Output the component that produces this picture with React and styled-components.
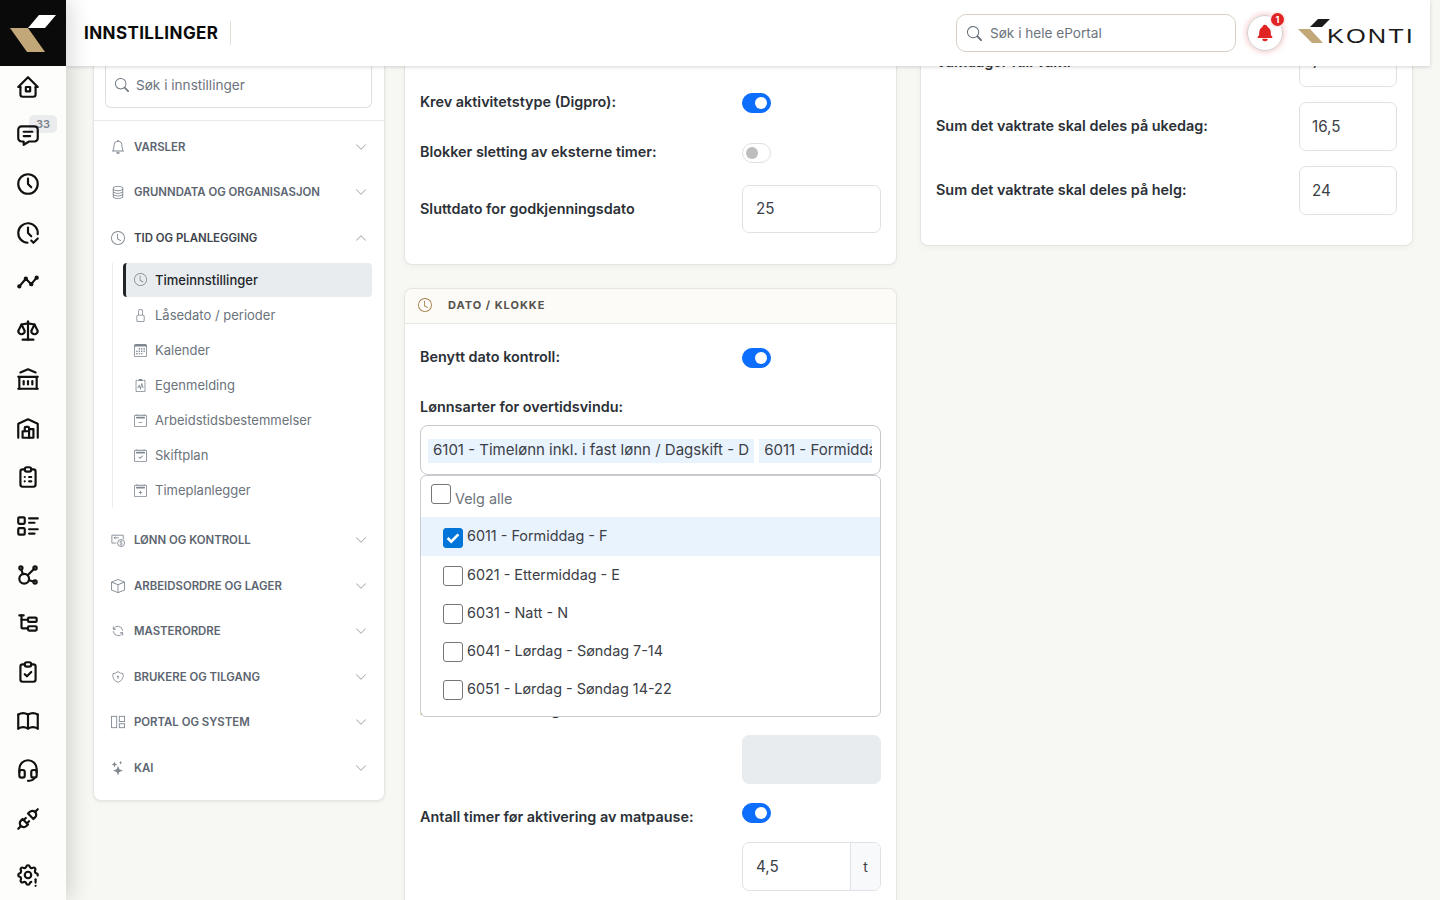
import React from 'react';
import styled, { createGlobalStyle } from 'styled-components';
import {
  TbHome2, TbMessage, TbClock, TbClockCheck, TbTimeline, TbScale, TbBuildingBank, TbBuildingWarehouse,
  TbClipboardList, TbListDetails, TbAffiliate, TbSubtask, TbClipboardCheck, TbBook, TbHeadset, TbPlugConnected,
  TbSettingsExclamation, TbBellFilled, TbRefresh, TbShieldLock,
} from 'react-icons/tb';
import {
  BsSearch, BsBell, BsChevronDown, BsChevronUp, BsDatabase, BsClock, BsLock, BsCalendar3, BsClipboard2Pulse,
  BsCalendar2Minus, BsCalendar2Check, BsCalendar2Plus, BsBox, BsStars,
} from 'react-icons/bs';

const GlobalStyle = createGlobalStyle`
  html, body { margin: 0; height: 100%; overflow: hidden; }
  body { font-family: Inter, "Noto Sans", sans-serif; background: #f7f7f3; color: #212529; }
  * { box-sizing: border-box; }
`;

const Page = styled.div`
  display: flex;
  width: 1440px;
  height: 900px;
  overflow: hidden;
`;

const Rail = styled.aside`
  width: 66px;
  flex: none;
  background: #fdfdfb;
  box-shadow: 4px 0 22px rgba(0, 0, 0, 0.16);
  display: flex;
  flex-direction: column;
  z-index: 3;
`;

const LogoBox = styled.div`
  height: 66px;
  background: #0a0a0a;
  flex: none;
`;

const RailList = styled.nav`
  display: flex;
  flex-direction: column;
  align-items: center;
  gap: 22.8px;
  padding: 7.6px 10px 0 0;
  color: #111;
`;

const RailItem = styled.div`
  position: relative;
  height: 26px;
  display: flex;
  align-items: center;
  justify-content: center;
  margin-top: ${(p) => p.$top || 0}px;
  svg { display: block; position: relative; }
`;

const RailBadge = styled.span`
  position: absolute;
  left: 14px;
  top: -7px;
  width: 28px;
  height: 18px;
  border-radius: 5px;
  background: #ebecee;
  color: #7a808a;
  font-size: 11px;
  font-weight: 600;
  text-align: center;
  line-height: 18px;
`;

const Right = styled.div`
  flex: 1;
  min-width: 0;
  display: flex;
  flex-direction: column;
`;

const Header = styled.header`
  height: 66px;
  width: 1364px;
  flex: none;
  background: #fff;
  box-shadow: 0 1px 4px rgba(0, 0, 0, 0.16);
  display: flex;
  align-items: center;
  padding: 0 17px 0 18px;
  z-index: 2;
`;

const Title = styled.h1`
  margin: 0;
  font-size: 17px;
  font-weight: 700;
  letter-spacing: 0.4px;
  color: #0a0a0a;
  padding-right: 12px;
  height: 24px;
  line-height: 24px;
  border-right: 1px solid #e3e0d8;
`;

const GlobalSearch = styled.div`
  margin-left: auto;
  width: 280px;
  height: 38px;
  border: 1px solid #d8d0c4;
  border-radius: 10px;
  display: flex;
  align-items: center;
  gap: 8px;
  padding-left: 10px;
  color: #6c757d;
  font-size: 13.6px;
  svg { color: #5f6b76; }
`;

const BellButton = styled.div`
  position: relative;
  width: 36px;
  height: 36px;
  margin-left: 11px;
  border-radius: 50%;
  border: 1px solid #cfcfcf;
  box-shadow: 0 0 6px rgba(220, 38, 38, 0.35);
  display: flex;
  align-items: center;
  justify-content: center;
  color: #e02424;
`;

const BellCount = styled.span`
  position: absolute;
  top: -3px;
  right: -2px;
  width: 13px;
  height: 13px;
  border-radius: 50%;
  background: #e02424;
  color: #fff;
  font-size: 9px;
  font-weight: 700;
  text-align: center;
  line-height: 13px;
  box-shadow: 0 0 0 1.5px #fdeaea;
`;

const Brand = styled.div`
  display: flex;
  align-items: flex-end;
  margin: 0 0 4px 15px;
  height: 24px;
`;

const BrandMark = styled.svg`
  width: 36px;
  height: 24px;
  flex: none;
`;

const BrandText = styled.span`
  font-family: "Liberation Sans", sans-serif;
  font-size: 20px;
  letter-spacing: 1.6px;
  line-height: 20px;
  color: #1b1b1b;
  margin: 0 0 -3px -7px;
  display: inline-block;
  transform: scaleX(1.27);
  transform-origin: left center;
  width: 86px;
`;

const Main = styled.main`
  flex: 1;
  min-height: 0;
  overflow: hidden;
  display: flex;
  align-items: flex-start;
  padding-left: 27px;
`;

const Nav = styled.section`
  width: 292px;
  flex: none;
  background: #fff;
  border: 1px solid #e6e6e3;
  border-top: none;
  border-radius: 0 0 8px 8px;
  box-shadow: 0 1px 3px rgba(0, 0, 0, 0.08);
  padding-bottom: 9px;
`;

const NavSearchWrap = styled.div`
  padding: 0 12px 12px 11px;
  margin-bottom: 3px;
  border-bottom: 1px solid #e9e9e7;
`;

const NavSearch = styled.div`
  height: 42px;
  border: 1px solid #dedede;
  border-top: none;
  border-radius: 0 0 6px 6px;
  display: flex;
  align-items: center;
  gap: 7px;
  padding: 0 0 3px 9px;
  font-size: 13.6px;
  color: #6c757d;
  svg { color: #6b7680; }
`;

const Group = styled.div`
  height: 45.5px;
  display: flex;
  align-items: center;
  padding: 0 17px 0 17px;
  font-size: 11.4px;
  font-weight: 600;
  color: ${(p) => (p.$open ? '#3d444c' : '#5c6570')};
  svg:first-child { color: #7f8790; margin-right: 9px; flex: none; }
  span { flex: 1; }
  svg:last-child { color: #98a0a8; }
`;

const SubList = styled.div`
  margin: 2px 12px 10px 18px;
  padding-left: 10px;
  border-left: 1px solid #ececea;
  display: flex;
  flex-direction: column;
`;

const SubItem = styled.div`
  height: ${(p) => (p.$active ? 34 : 35)}px;
  margin-bottom: ${(p) => (p.$active ? 1 : 0)}px;
  display: flex;
  align-items: center;
  gap: 8px;
  padding-left: 8px;
  font-size: 13px;
  border-radius: 4px;
  font-weight: ${(p) => (p.$active ? 500 : 400)};
  color: ${(p) => (p.$active ? '#212529' : '#6b737b')};
  background: ${(p) => (p.$active ? '#e9ecef' : 'transparent')};
  border-left: 3px solid ${(p) => (p.$active ? '#212529' : 'transparent')};
  svg { color: #7f8790; flex: none; }
`;

const Column = styled.div`
  width: 493px;
  flex: none;
  margin-left: ${(p) => p.$left}px;
  margin-top: ${(p) => p.$top || 0}px;
  display: flex;
  flex-direction: column;
  gap: 23px;
`;

const Card = styled.section`
  background: #fff;
  border: 1px solid #e6e5e0;
  border-radius: 8px;
  box-shadow: 0 2px 6px rgba(0, 0, 0, 0.04);
`;

const TopCard = styled(Card)`
  border-top: none;
  border-radius: 0 0 8px 8px;
  padding: 22px 15px 31px;
  display: flex;
  flex-direction: column;
`;

const CardHead = styled.div`
  height: 35px;
  background: #fcfbf7;
  border-bottom: 1px solid #e6e5e0;
  border-radius: 8px 8px 0 0;
  display: flex;
  align-items: center;
  padding: 0 0 2px 13px;
  font-size: 11px;
  font-weight: 700;
  letter-spacing: 1px;
  color: #55524c;
  svg { color: #a5814f; margin-right: 16px; }
`;

const CardBody = styled.div`
  padding: 22px 15px 0;
  display: flex;
  flex-direction: column;
  height: 700px;
`;

const Row = styled.div`
  display: grid;
  grid-template-columns: 322px 1fr;
  align-items: center;
  min-height: ${(p) => p.$h || 30}px;
  margin-bottom: ${(p) => p.$mb || 0}px;
`;

const Label = styled.label`
  font-size: 14.4px;
  font-weight: 600;
  color: #2b3036;
  margin-top: ${(p) => (p.$down || 0) * 2}px;
  margin-bottom: ${(p) => (p.$up || 0) * 2}px;
`;

const Toggle = styled.span`
  display: block;
  width: 29px;
  height: 20px;
  border-radius: 10px;
  position: relative;
  background: ${(p) => (p.$on ? '#0d6efd' : '#fff')};
  border: 1px solid ${(p) => (p.$on ? '#0d6efd' : '#dfdfdf')};
  &::after {
    content: '';
    position: absolute;
    top: 3px;
    left: ${(p) => (p.$on ? '12px' : '3px')};
    width: 12px;
    height: 12px;
    border-radius: 50%;
    background: ${(p) => (p.$on ? '#fff' : '#bdbdbd')};
  }
`;

const Input = styled.div`
  height: ${(p) => p.$h || 48}px;
  border: 1px solid ${(p) => (p.$disabled ? '#e9ecef' : '#dee2e6')};
  border-radius: 7px;
  background: ${(p) => (p.$disabled ? '#e9ecef' : '#fff')};
  font-size: 15.2px;
  color: #3b4046;
  display: flex;
  align-items: center;
  padding: 0 0 1px ${(p) => p.$pad || 13}px;
`;

const AddonGroup = styled.div`
  display: grid;
  grid-template-columns: 1fr 30px;
  height: 49px;
  border: 1px solid #dee2e6;
  border-radius: 7px;
  overflow: hidden;
  font-size: 15.2px;
  color: #3b4046;
`;

const AddonValue = styled.span`
  display: flex;
  align-items: center;
  padding-left: 13px;
`;

const Addon = styled.span`
  display: flex;
  align-items: center;
  justify-content: center;
  background: #f8f9fa;
  border-left: 1px solid #dee2e6;
  font-size: 14px;
`;

const SelectWrap = styled.div`
  position: relative;
  margin-top: 10px;
`;

const Select = styled.div`
  height: 50px;
  border: 1px solid #c5c8cc;
  border-radius: 8px;
  display: flex;
  gap: 5px;
  padding: 13px 8px 0 7px;
  overflow: hidden;
  white-space: nowrap;
`;

const Chip = styled.span`
  height: 24px;
  flex: none;
  background: #e9f3fe;
  padding: 0 5px;
  font-size: 15px;
  line-height: 22px;
  color: #3b4046;
`;

const ChipClip = styled(Chip)`
  flex: 1;
  overflow: hidden;
`;

const Dropdown = styled.div`
  position: absolute;
  left: 0;
  right: 0;
  top: 100%;
  height: 242px;
  background: #fff;
  border: 1px solid #c9ccd0;
  border-radius: 6px;
  z-index: 1;
  font-size: 14.4px;
  color: #3b4046;
`;

const SelectAll = styled.div`
  height: 41px;
  padding: 8px 0 0 10px;
  display: flex;
  align-items: flex-start;
  color: #6f757c;
  span { margin: 6px 0 0 4px; }
`;

const Option = styled.div`
  height: ${(p) => p.$h || 38}px;
  display: flex;
  align-items: center;
  gap: 4px;
  padding-left: 22px;
  background: ${(p) => (p.$checked ? '#e9f3fe' : 'transparent')};
  span { margin-bottom: ${(p) => (p.$checked ? 3 : 1)}px; }
  i { margin-top: ${(p) => (p.$checked ? 3 : 2)}px; }
`;

const Check = styled.i`
  width: 20px;
  height: 20px;
  flex: none;
  display: block;
  border-radius: 3px;
  border: 1px solid ${(p) => (p.$checked ? '#0075d9' : '#767676')};
  background: ${(p) => (p.$checked ? '#0075d9' : '#fff')};
  svg { display: block; }
`;

const HiddenLabel = styled(Label)`
  margin-top: 226px;
  margin-bottom: 16.6px;
`;

const ValueRow = styled.div`
  display: grid;
  grid-template-columns: 363px 98px;
  align-items: center;
  margin-bottom: 15px;
  height: 49px;
`;

const RightCard = styled(Card)`
  border-top: none;
  border-radius: 0 0 8px 8px;
  padding: 0 15px 15px;
`;

const Spacer = styled.div`
  width: 139px;
`;

const LogoMark = () => (
  <svg width="66" height="66" viewBox="0 0 66 66">
    <path d="M39 15h17L45 28H28z" fill="#fff" />
    <path d="M10 28h18l17 24H27z" fill="#c2a878" />
  </svg>
);

const SalaryIcon = () => (
  <svg width="14" height="14" viewBox="0 0 16 16" fill="none" stroke="currentColor" strokeWidth="1">
    <path d="M6 11.5H1V2.5h13V7" />
    <path d="M5 7l-1.5-1.5L5 4M3.5 5.5H9" />
    <circle cx="11.5" cy="11.5" r="4" />
    <path d="M13 10c-1-1-3-.5-3 .5s3 1 3 2-2 1.5-3 .5M11.5 8.5v6" strokeWidth="0.7" />
  </svg>
);

const PortalIcon = () => (
  <svg width="14" height="14" viewBox="0 0 16 16" fill="none" stroke="currentColor" strokeWidth="1">
    <rect x="0.5" y="1.5" width="6" height="13" />
    <rect x="9.5" y="1.5" width="6" height="6" />
    <rect x="9.5" y="10" width="6" height="4.5" />
  </svg>
);

const railIcons = [
  TbHome2, null, TbClock, TbClockCheck, TbTimeline, TbScale, TbBuildingBank, TbBuildingWarehouse,
  TbClipboardList, TbListDetails, TbAffiliate, TbSubtask, TbClipboardCheck, TbBook, TbHeadset, TbPlugConnected,
];

const subItems = [
  [BsClock, 'Timeinnstillinger', true],
  [BsLock, 'Låsedato / perioder'],
  [BsCalendar3, 'Kalender'],
  [BsClipboard2Pulse, 'Egenmelding'],
  [BsCalendar2Minus, 'Arbeidstidsbestemmelser'],
  [BsCalendar2Check, 'Skiftplan'],
  [BsCalendar2Plus, 'Timeplanlegger'],
];

const MasterIcon = () => <TbRefresh size={14} strokeWidth={1.5} />;
const ShieldIcon = () => <TbShieldLock size={14} strokeWidth={1.4} />;

const groupsAfter = [
  [SalaryIcon, 'LØNN OG KONTROLL'],
  [BsBox, 'ARBEIDSORDRE OG LAGER'],
  [MasterIcon, 'MASTERORDRE'],
  [ShieldIcon, 'BRUKERE OG TILGANG'],
  [PortalIcon, 'PORTAL OG SYSTEM'],
  [BsStars, 'KAI'],
];

const options = ['6021 - Ettermiddag - E', '6031 - Natt - N', '6041 - Lørdag - Søndag 7-14', '6051 - Lørdag - Søndag 14-22'];

export default function App() {
  return (
    <Page>
      <GlobalStyle />
      <Rail>
        <LogoBox><LogoMark /></LogoBox>
        <RailList>
          {railIcons.map((Icon, i) => (
            <RailItem key={i}>
              {Icon ? <Icon size={26} strokeWidth={2} /> : (
                <>
                  <RailBadge>33</RailBadge>
                  <TbMessage size={26} strokeWidth={2} />
                </>
              )}
            </RailItem>
          ))}
          <RailItem $top={8}><TbSettingsExclamation size={26} strokeWidth={2} /></RailItem>
        </RailList>
      </Rail>
      <Right>
        <Header>
          <Title>INNSTILLINGER</Title>
          <GlobalSearch><BsSearch size={15} />Søk i hele ePortal</GlobalSearch>
          <BellButton>
            <TbBellFilled size={20} />
            <BellCount>1</BellCount>
          </BellButton>
          <Brand>
            <BrandMark viewBox="0 0 36 24">
              <path d="M20 0h12l-8 8H12z" fill="#1b1b1b" />
              <path d="M0 10h12l13 14H14z" fill="#c2a878" />
            </BrandMark>
            <BrandText>KONTI</BrandText>
          </Brand>
        </Header>
        <Main>
          <Nav>
            <NavSearchWrap>
              <NavSearch><BsSearch size={14} />Søk i innstillinger</NavSearch>
            </NavSearchWrap>
            <Group><BsBell size={14} /><span>VARSLER</span><BsChevronDown size={12} /></Group>
            <Group><BsDatabase size={14} /><span>GRUNNDATA OG ORGANISASJON</span><BsChevronDown size={12} /></Group>
            <Group $open><BsClock size={14} /><span>TID OG PLANLEGGING</span><BsChevronUp size={12} /></Group>
            <SubList>
              {subItems.map(([Icon, text, active]) => (
                <SubItem key={text} $active={active}><Icon size={13} />{text}</SubItem>
              ))}
            </SubList>
            {groupsAfter.map(([Icon, text]) => (
              <Group key={text}><Icon size={14} /><span>{text}</span><BsChevronDown size={12} /></Group>
            ))}
          </Nav>
          <Column $left={19}>
            <TopCard>
              <Row $h={30} $mb={20}><Label $up={1.5}>Krev aktivitetstype (Digpro):</Label><Toggle $on /></Row>
              <Row $h={30} $mb={17}><Label $up={1.5}>Blokker sletting av eksterne timer:</Label><Toggle /></Row>
              <Row $h={48}><Label $up={1}>Sluttdato for godkjenningsdato</Label><Input>25</Input></Row>
            </TopCard>
            <Card>
              <CardHead><BsClock size={14} />DATO / KLOKKE</CardHead>
              <CardBody>
                <Row $h={24} $mb={28}><Label $up={1.5}>Benytt dato kontroll:</Label><Toggle $on /></Row>
                <Label>Lønnsarter for overtidsvindu:</Label>
                <SelectWrap>
                  <Select>
                    <Chip>6101 - Timelønn inkl. i fast lønn / Dagskift - D</Chip>
                    <ChipClip>6011 - Formiddag - F</ChipClip>
                  </Select>
                  <Dropdown>
                    <SelectAll><Check /><span>Velg alle</span></SelectAll>
                    <Option $checked $h={39}>
                      <Check $checked>
                        <svg viewBox="0 0 20 20" width="18" height="18"><path d="M4 10l4 4 8-8" fill="none" stroke="#fff" strokeWidth="3" /></svg>
                      </Check>
                      <span>6011 - Formiddag - F</span>
                    </Option>
                    {options.map((o) => (
                      <Option key={o}><Check /><span>{o}</span></Option>
                    ))}
                  </Dropdown>
                </SelectWrap>
                <HiddenLabel>Lønnsart for vakt og:</HiddenLabel>
                <Row $h={49} $mb={14}><Spacer /><Input $disabled $h={49} /></Row>
                <Row $h={30} $mb={14}><Label $down={4}>Antall timer før aktivering av matpause:</Label><Toggle $on /></Row>
                <Row $h={49}>
                  <Spacer />
                  <AddonGroup><AddonValue>4,5</AddonValue><Addon>t</Addon></AddonGroup>
                </Row>
              </CardBody>
            </Card>
          </Column>
          <Column $left={23} $top={-28}>
            <RightCard>
              <ValueRow><Label $up={1}>Vaktdager full vakt:</Label><Input $h={49} $pad={12}>7</Input></ValueRow>
              <ValueRow><Label $up={1}>Sum det vaktrate skal deles på ukedag:</Label><Input $h={49} $pad={12}>16,5</Input></ValueRow>
              <ValueRow><Label $up={1}>Sum det vaktrate skal deles på helg:</Label><Input $h={49} $pad={12}>24</Input></ValueRow>
            </RightCard>
          </Column>
        </Main>
      </Right>
    </Page>
  );
}
